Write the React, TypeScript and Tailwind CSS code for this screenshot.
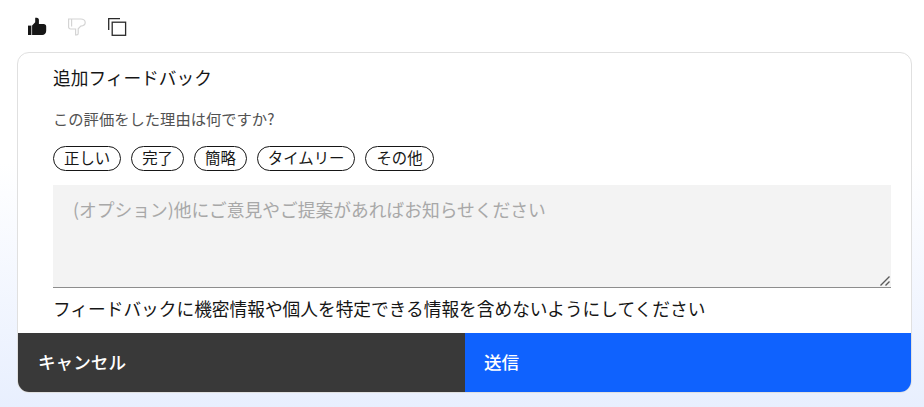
import React from 'react';

const FONT = "font-['Noto_Sans_CJK_JP',sans-serif]";

const ThumbUp = () => (
  <svg width="20" height="20" viewBox="0 0 20 20" fill="#161616">
    <rect x="1" y="8.6" width="3.3" height="9.4" />
    <rect x="4.3" y="8.6" width="0.8" height="9.4" fill="#a0a0a0" />
    <path d="M5.1 8.6 8.2 5.2V0.8h1.6c1.3 0 2.1 1 2.1 2.2v4h4.7c1.6 0 2.6 1 2.6 2.4v4.4c0 2.4-1.6 4.2-4 4.2H5.1z" />
  </svg>
);

const ThumbDown = () => (
  <svg width="20" height="20" viewBox="0 0 20 20" fill="none" stroke="#d4d4d4" strokeWidth="1.2">
    <path d="M1.6 2h12.2c2.4 0 4.4 1.6 4.4 3.6s-2 3.4-4.4 3.6l-2.6 2.6v4.4c0 .9-.6 1.6-1.4 1.6H8.6V12H3.6c-1.2 0-2-.8-2-2z" />
    <path d="M4.6 2v7.6" />
  </svg>
);

const CopyIcon = () => (
  <svg width="20" height="20" viewBox="0 0 20 20" fill="none" stroke="#2a2a2a" strokeWidth="1.3">
    <path d="M1.7 13V1.7H13" />
    <rect x="5.2" y="5.2" width="13.4" height="13.1" />
  </svg>
);

const tags = ['正しい', '完了', '簡略', 'タイムリー', 'その他'];

export default function App() {
  return (
    <div className={`${FONT} h-[407px] w-[924px] overflow-hidden bg-gradient-to-b from-white from-40% to-[#e8effe] pl-[17px] pr-3 text-[#161616]`}>
      <div className="flex h-[52px] items-center gap-5 pl-[10px] pt-[2px]">
        <ThumbUp />
        <ThumbDown />
        <CopyIcon />
      </div>
      <div className="h-[341px] w-[895px] overflow-hidden rounded-xl border border-[#e0e0e0] bg-white">
        <div className="h-[280px] pl-[35px] pr-[20px]">
          <h2 className="pt-[11px] text-[17.7px] leading-[26px]">追加フィードバック</h2>
          <p className="mt-[18px] text-[15.3px] leading-5 text-[#525252]">この評価をした理由は何ですか?</p>
          <div className="mt-[18px] flex gap-[10px]">
            {tags.map((t) => (
              <span key={t} className="flex h-[25px] items-center rounded-full border border-[#161616] px-[10px] pb-[2px] text-[15.4px]">
                {t}
              </span>
            ))}
          </div>
          <div className="relative mt-[14px] w-[838px]">
            <textarea
              className="block h-[103px] w-full resize-none border-b border-[#8d8d8d] bg-[#f3f3f3] px-5 py-[11px] text-[17.75px] leading-[26px] outline-none placeholder:text-[#a8a8a8]"
              placeholder="(オプション)他にご意見やご提案があればお知らせください"
            />
            <svg className="absolute bottom-[2px] right-[1px]" width="10" height="10" viewBox="0 0 10 10" fill="none" stroke="#5a5a5a" strokeWidth="1.4">
              <path d="M0.5 9.5 9.5 0.5M5.5 9.5 9.5 5.5" />
            </svg>
          </div>
          <p className="mt-[7px] text-[17.7px] leading-[26px] text-[#161616]">フィードバックに機密情報や個人を特定できる情報を含めないようにしてください</p>
        </div>
        <div className="flex h-[60px] text-[17.6px] font-medium text-white">
          <div className="flex w-[447px] items-center bg-[#393939] pb-[2px] pl-5">キャンセル</div>
          <div className="flex flex-1 items-center bg-[#0f62fe] pb-[2px] pl-[19px]">送信</div>
        </div>
      </div>
    </div>
  );
}
